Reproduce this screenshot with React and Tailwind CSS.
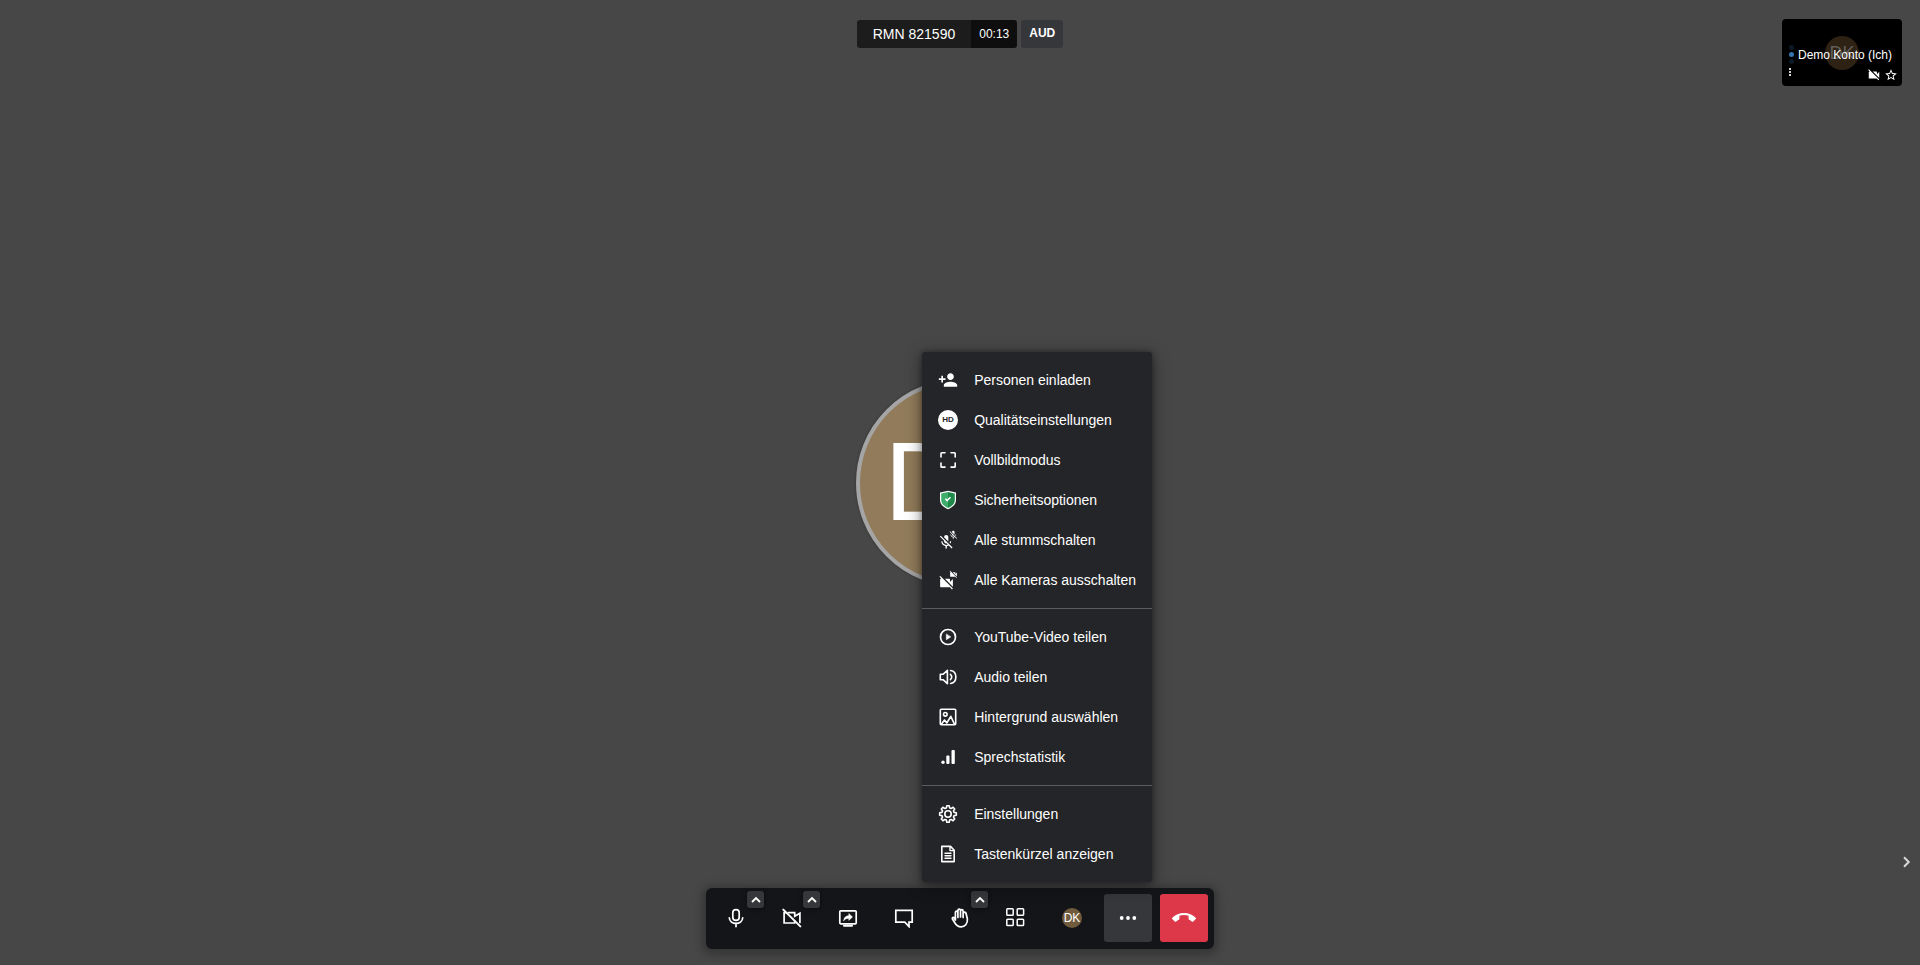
import React from 'react';
import {
  MdCallEnd,
  MdMicOff,
  MdMoreVert,
  MdPersonAdd,
  MdStarBorder,
  MdVideocamOff,
} from 'react-icons/md';

function Line({ children, size = 'size-5', width = 1.7 }) {
  return (
    <svg
      viewBox="0 0 20 20"
      className={size}
      fill="none"
      stroke="currentColor"
      strokeWidth={width}
      strokeLinejoin="round"
      strokeLinecap="round"
      aria-hidden="true"
    >
      {children}
    </svg>
  );
}

const HdIcon = () => (
  <span className="flex size-5 items-center justify-center rounded-full bg-white text-[8px] font-bold leading-none text-[#242528]">
    HD
  </span>
);

const FullscreenIcon = () => (
  <Line width={1.6}>
    <path d="M3 7V3.5Q3 2.8 3.7 2.8H7M13 2.8H16.5Q17.2 2.8 17.2 3.5V7M17.2 13V16.4Q17.2 17.1 16.5 17.1H13M7 17.1H3.7Q3 17.1 3 16.4V13" />
  </Line>
);

const ShieldIcon = () => (
  <svg viewBox="0 0 20 20" className="size-5" aria-hidden="true">
    <path d="M10 .8 18 2.6V10c0 4.300-3.200 7.300-8 9.200C5.200 17.300 2 14.300 2 10V2.600Z" fill="#fff" />
    <path d="M10 2.100 16.800 3.600V10c0 3.600-2.700 6.200-6.800 7.900Z" fill="#1f8a4c" />
    <path d="M10 2.100 3.200 3.600V10c0 3.600 2.700 6.200 6.800 7.900Z" fill="#3fae6c" />
    <path d="m7.400 8.800 1.700 1.700 3.300-3.300" fill="none" stroke="#fff" strokeWidth="1.600" />
  </svg>
);

const MuteAllIcon = () => (
  <svg viewBox="0 0 20 20" className="size-5" fill="currentColor" aria-hidden="true">
    <MdMicOff x="-0.3" y="3.500" size={17} />
    <MdMicOff x="10.300" y="0" size={10} />
  </svg>
);

const CamerasOffIcon = () => (
  <svg viewBox="0 0 20 20" className="size-5" fill="currentColor" aria-hidden="true">
    <MdVideocamOff x="0" y="4.500" size={17} />
    <MdVideocamOff x="11" y="0" size={9} />
  </svg>
);

const PlayIcon = () => (
  <Line>
    <circle cx="10" cy="10" r="7.500" />
    <path d="M8.300 7.200v5.600l4.400-2.800z" fill="currentColor" strokeWidth="0.500" />
  </Line>
);

const AudioIcon = () => (
  <Line width={1.6}>
    <path d="M2.300 7.300H5L9.400 3.300V16.700L5 12.700H2.300Z" />
    <path d="M12.400 7.400Q15 10 12.400 12.600" />
    <path d="M12.600 3.500C19.600 4.500 19.600 15.500 12.600 16.500" />
  </Line>
);

const ImageIcon = () => (
  <Line width={1.6}>
    <rect x="2.300" y="2.300" width="15.400" height="15.400" rx="1" />
    <circle cx="7.300" cy="7.300" r="1.800" />
    <path d="m3.500 16.900 3-3.900 2.300 3 4-6.700 3.500 7.500" />
  </Line>
);

const StatsIcon = () => (
  <svg viewBox="0 0 20 20" className="size-5" fill="currentColor" aria-hidden="true">
    <circle cx="5" cy="15.300" r="1.700" />
    <rect x="8.300" y="8.500" width="3.200" height="8.500" rx="1" />
    <rect x="13.500" y="3" width="3.300" height="14" rx="1" />
  </svg>
);

// Eight-toothed outline: each tooth has two tip corners and two root corners.
const gearPoints = Array.from({ length: 8 }, (_, tooth) =>
  [
    [-15, 6.3],
    [-8, 8.4],
    [8, 8.4],
    [15, 6.3],
  ].map(([offset, radius]) => {
    const angle = ((tooth * 45 + offset) * Math.PI) / 180;
    return `${10 + radius * Math.sin(angle)},${10 - radius * Math.cos(angle)}`;
  })
)
  .flat()
  .join(' ');

const GearIcon = () => (
  <Line width={1.6}>
    <polygon points={gearPoints} />
    <circle cx="10" cy="10" r="3.200" />
  </Line>
);

const DocIcon = () => (
  <Line width={1.6}>
    <path d="M3.800 2.400H12.500L16.200 6.200V17.600H3.800Z" />
    <path d="M12 2.600V6.600H16M7 9.300H13M7 11.800H13M7 14.300H13" strokeWidth="1.400" />
  </Line>
);

const menuGroups = [
  [
    ['Personen einladen', <MdPersonAdd size={20} />],
    ['Qualitätseinstellungen', <HdIcon />],
    ['Vollbildmodus', <FullscreenIcon />],
    ['Sicherheitsoptionen', <ShieldIcon />],
    ['Alle stummschalten', <MuteAllIcon />],
    ['Alle Kameras ausschalten', <CamerasOffIcon />],
  ],
  [
    ['YouTube-Video teilen', <PlayIcon />],
    ['Audio teilen', <AudioIcon />],
    ['Hintergrund auswählen', <ImageIcon />],
    ['Sprechstatistik', <StatsIcon />],
  ],
  [
    ['Einstellungen', <GearIcon />],
    ['Tastenkürzel anzeigen', <DocIcon />],
  ],
];

function OverflowMenu() {
  return (
    <div className="absolute right-0 bottom-full mb-3 rounded-[3px] bg-[#242528] shadow-[0_3px_16px_rgba(0,0,0,0.5),0_0_4px_1px_rgba(0,0,0,0.2)]">
      {menuGroups.map((group, i) => (
        <ul key={i} className="border-t border-[#5a5b5e] py-2 first:border-t-0">
          {group.map(([label, icon]) => (
            <li key={label}>
              <button
                type="button"
                className="flex h-10 w-full items-center gap-4 px-4 text-left text-sm whitespace-nowrap text-white"
              >
                <span className="flex size-5 shrink-0 items-center justify-center" aria-hidden="true">
                  {icon}
                </span>
                {label}
              </button>
            </li>
          ))}
        </ul>
      ))}
    </div>
  );
}

function ToolButton({ label, caret, tone = '', children }) {
  return (
    <div className="relative size-12">
      <button
        type="button"
        aria-label={label}
        className={`flex size-12 items-center justify-center rounded-[3px] text-white ${tone}`}
      >
        {children}
      </button>
      {caret && (
        <button
          type="button"
          aria-label={caret}
          className="absolute -top-[3px] -right-1 flex size-[17px] items-center justify-center rounded-[3px] bg-[#36373a] text-white shadow-[0_1px_4px_rgba(0,0,0,0.5)]"
        >
          <svg viewBox="0 0 10 10" className="size-[10px]" fill="none" stroke="currentColor" strokeWidth="1.800" aria-hidden="true">
            <path d="M1 7 5 3 9 7" />
          </svg>
        </button>
      )}
    </div>
  );
}

function Toolbar() {
  return (
    <div className="mb-4 flex gap-2 self-end justify-self-center rounded-md bg-[#141518] px-1.5 pt-1.5 pb-[7px] shadow-[0_2px_8px_4px_rgba(0,0,0,0.25)]">
      <ToolButton label="Mikrofon" caret="Audioeinstellungen">
        <Line>
          <rect x="6.800" y="1.600" width="6.400" height="10.800" rx="3.200" />
          <path d="M3.300 9.800C3.600 17.200 16.400 17.200 16.700 9.800M10 15.500V18.600" />
        </Line>
      </ToolButton>
      <ToolButton label="Kamera" caret="Videoeinstellungen">
        <Line>
          <path d="M6.300 4.700H12.700V8.200L17.900 5.200V14.500M3.500 4.700H2.100V15H12.700V13" strokeLinejoin="miter" />
          <path d="M1.300 1.600 18.300 18.400" strokeWidth="2" />
        </Line>
      </ToolButton>
      <ToolButton label="Bildschirmfreigabe">
        <Line>
          <rect x="1.800" y="2.800" width="16.400" height="13" rx="1" />
          <path d="M6 17.800H14" strokeWidth="2" />
          <path d="M5.600 12.700C5.800 9.500 7.800 7.700 10.800 7.600V5.400L14.600 9 10.800 12.400V10.400C8.600 10.300 7 11 5.600 12.700Z" fill="currentColor" strokeWidth="0.400" />
        </Line>
      </ToolButton>
      <ToolButton label="Chat">
        <Line>
          <path d="M1.800 2.300H18.200V14.200H15V18.600L10.800 14.200H1.800Z" strokeLinejoin="miter" />
        </Line>
      </ToolButton>
      <ToolButton label="Hand heben" caret="Reaktionen">
        <Line width={1.7}>
          <path d="M5.400 12V4.300Q5.500 3.200 6.600 3.200T7.900 4.300V9.500M7.900 9V2.300Q8 1.100 9.200 1.100T10.500 2.300V9M10.500 9V2.800Q10.600 1.700 11.800 1.700T13.100 2.800V9.500M13.100 9.500V5.300Q13.300 4.200 14.600 4.200T16 5.300L17.400 11C17.800 15.800 14.800 18.800 11.200 18.800 7.500 18.800 6 17 4.600 14.500L2.300 10.800Q2.200 9 4 9.500L5.400 12" />
        </Line>
      </ToolButton>
      <ToolButton label="Kachelansicht">
        <Line width={1.5}>
          <rect x="0.800" y="0.800" width="6.400" height="6.400" rx="0.800" />
          <rect x="11.200" y="0.800" width="6.400" height="6.400" rx="0.800" />
          <rect x="0.800" y="11.200" width="6.400" height="6.400" rx="0.800" />
          <rect x="11.200" y="11.200" width="6.400" height="6.400" rx="0.800" />
        </Line>
      </ToolButton>
      <ToolButton label="Profil">
        <span className="flex size-5 items-center justify-center rounded-full bg-[#705b3c] text-xs">DK</span>
      </ToolButton>
      <div className="relative">
        <ToolButton label="Weitere Einstellungen" tone="bg-[#36373a]">
          <svg viewBox="0 0 20 20" className="size-5" fill="currentColor" aria-hidden="true">
            <circle cx="3.700" cy="10" r="1.900" />
            <circle cx="10" cy="10" r="1.900" />
            <circle cx="16.300" cy="10" r="1.900" />
          </svg>
        </ToolButton>
        <OverflowMenu />
      </div>
      <ToolButton label="Konferenz verlassen" tone="bg-[#dd3849]">
        <MdCallEnd size={24} />
      </ToolButton>
    </div>
  );
}

function Header() {
  return (
    <header className="mt-5 flex gap-1 self-start justify-self-center text-white">
      <div className="flex h-7 overflow-hidden rounded-[3px]">
        <h1 className="bg-[#1c1c1c] px-4 text-sm leading-7">RMN 821590</h1>
        <span className="bg-[#0e0e0e] px-2 text-xs leading-7">00:13</span>
      </div>
      <span className="h-7 rounded-[3px] bg-[#36373a] px-2 text-xs leading-[26px] font-bold">AUD</span>
    </header>
  );
}

function SelfView() {
  return (
    <section className="relative mt-[19px] mr-[18px] flex h-[67px] w-[120px] items-center justify-center self-start justify-self-end rounded bg-black text-white">
      <div className="flex size-[34px] items-center justify-center rounded-full bg-[#2d2214] text-lg text-[#625e59]">
        DK
      </div>
      <div className="absolute inset-0 flex flex-col justify-end gap-0.5 pr-1 pb-0.5 pl-1.5">
        <div className="flex items-center gap-1">
          <span className="flex w-[6px] flex-col items-center gap-[2px]">
            <i className="size-[5px] rounded-full bg-[#0c1a28]" />
            <i className="size-[5px] rounded-full bg-[#3673b1]" />
            <i className="size-[5px] rounded-full bg-[#0c1a28]" />
          </span>
          <span className="text-xs whitespace-nowrap">Demo Konto (Ich)</span>
        </div>
        <div className="flex h-[18px] items-center gap-[3px]">
          <button type="button" aria-label="Optionen" className="-ml-1 self-start">
            <MdMoreVert size={12} />
          </button>
          <span className="flex-1" />
          <MdVideocamOff size={14} />
          <MdStarBorder size={14} />
        </div>
      </div>
    </section>
  );
}

export default function App() {
  return (
    <main className="grid min-h-screen overflow-hidden bg-[#474747] font-['Liberation_Sans',Arial,sans-serif] *:col-start-1 *:row-start-1">
      <div className="flex size-52 items-center justify-center place-self-center rounded-full border-4 border-[#a5a5a5] bg-[#917b5a] pb-0.5 pl-1 text-[112px] leading-none text-white shadow-[0_0_3px_rgba(0,0,0,0.3)]">
        DK
      </div>
      <Header />
      <SelfView />
      <button
        type="button"
        aria-label="Miniaturansichten einblenden"
        className="mr-1 mb-[87px] flex h-8 w-5 items-center justify-center self-end justify-self-end text-[#d8d8d8]"
      >
        <svg viewBox="0 0 12 12" className="size-3" fill="none" stroke="currentColor" strokeWidth="2" aria-hidden="true">
          <path d="M4 1.300 8.700 6 4 10.700" />
        </svg>
      </button>
      <Toolbar />
    </main>
  );
}
